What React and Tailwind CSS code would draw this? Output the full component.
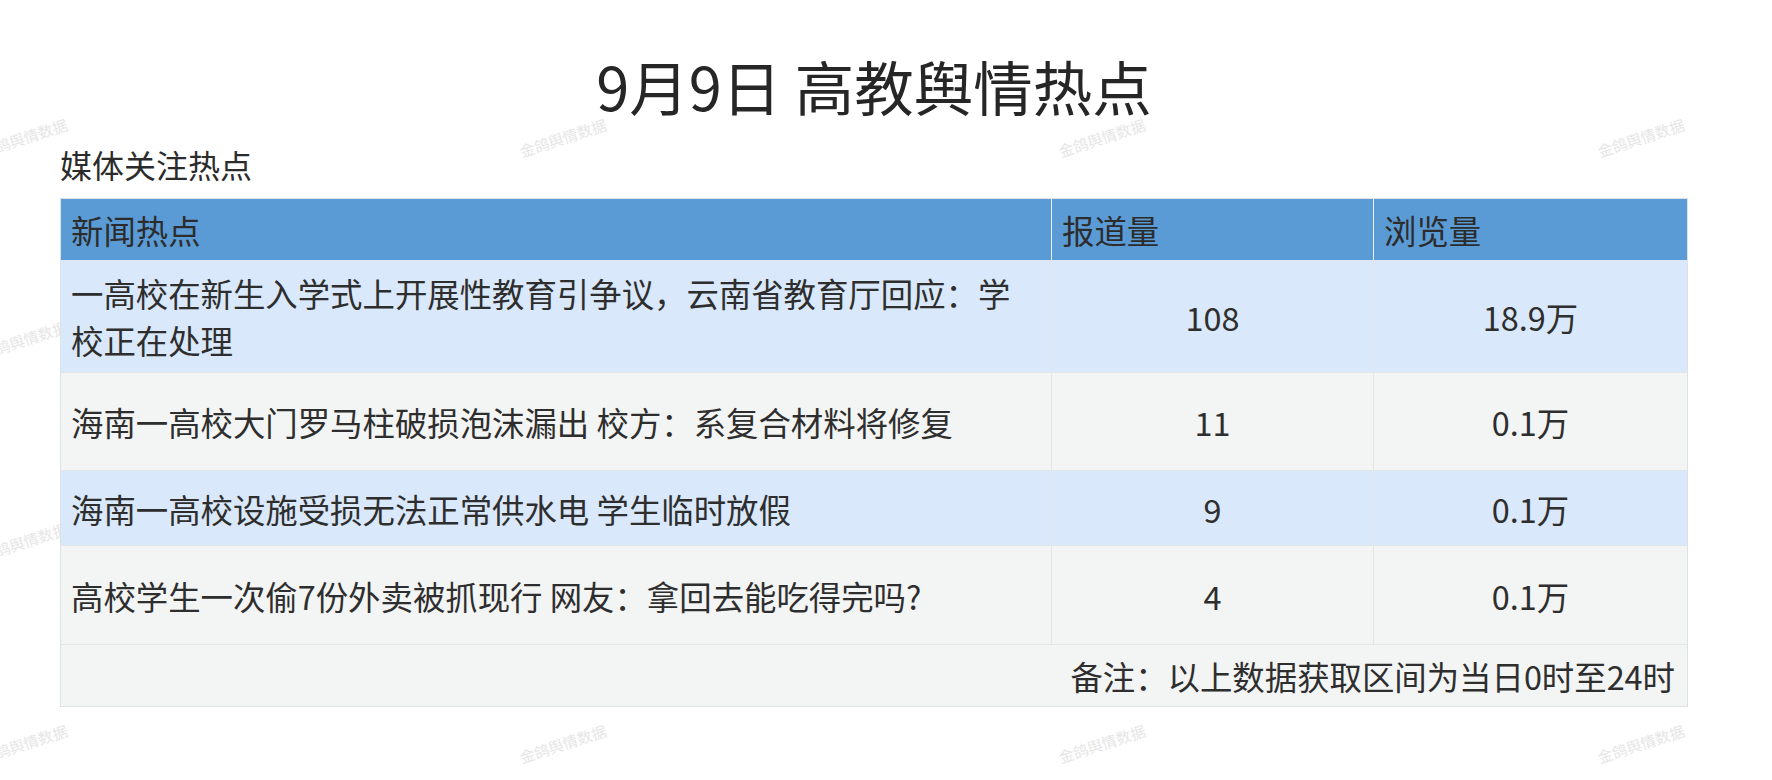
import React from "react";

const rows = [
  { t: "一高校在新生入学式上开展性教育引争议，云南省教育厅回应：学校正在处理", a: "108", b: "18.9万", bg: "bg-[#d9e8fa]", h: "h-[112px]" },
  { t: "海南一高校大门罗马柱破损泡沫漏出 校方：系复合材料将修复", a: "11", b: "0.1万", bg: "bg-[#f3f4f4]", h: "h-[98px] border-t border-[#e3e6e9]" },
  { t: "海南一高校设施受损无法正常供水电 学生临时放假", a: "9", b: "0.1万", bg: "bg-[#d9e8fa]", h: "h-[75px] border-t border-[#e3e6e9]" },
  { t: "高校学生一次偷7份外卖被抓现行 网友：拿回去能吃得完吗?", a: "4", b: "0.1万", bg: "bg-[#f3f4f4]", h: "h-[99px] border-t border-[#e3e6e9]" },
];

const marks = [
  [24, 138], [563, 138], [1102, 138], [1641, 138],
  [24, 340], [24, 542],
  [24, 744], [563, 744], [1102, 744], [1641, 744],
];

export default function App() {
  return (
    <div className="relative w-[1772px] h-[780px] overflow-hidden bg-white font-['Noto_Sans_CJK_SC','Noto_Sans',sans-serif] text-[#2e2e2e]">
      {marks.map(([x, y], i) => (
        <div
          key={i}
          className="absolute text-[15px] leading-[20px] text-[#e6e6e6] whitespace-nowrap -rotate-[18deg] -translate-x-1/2 -translate-y-1/2"
          style={{ left: x, top: y }}
        >
          金鸽舆情数据
        </div>
      ))}
      <div className="relative ml-[60px] w-[1628px]">
        <div className="pt-[44px] text-center text-[59.5px] leading-[82px] text-[#262626]">9月9日 高教舆情热点</div>
        <div className="mt-[16px] text-[32px] leading-[45px] text-[#2b2b2b]">媒体关注热点</div>
        <div className="mt-[11px] border border-[#dfe2e5] text-[32.4px] leading-[47px]">
          <div className="grid grid-cols-[990px_322px_314px] h-[61px] bg-[#5b9bd5] text-[#2c2c2c]">
            <div className="flex items-center pl-[10px]">新闻热点</div>
            <div className="flex items-center pl-[10px] border-l border-[#eaf1f8]">报道量</div>
            <div className="flex items-center pl-[10px] border-l border-[#eaf1f8]">浏览量</div>
          </div>
          {rows.map((r, i) => (
            <div key={i} className={`grid grid-cols-[990px_322px_314px] ${r.bg} ${r.h}`}>
              <div className="flex items-center pl-[10px] pr-[24px]">{r.t}</div>
              <div className="flex items-center justify-center border-l border-[#e3e6e9]">{r.a}</div>
              <div className="flex items-center justify-center border-l border-[#e3e6e9]">{r.b}</div>
            </div>
          ))}
          <div className="flex h-[62px] items-center justify-end border-t border-[#e3e6e9] bg-[#f3f4f4] pr-[12px]">
            备注：以上数据获取区间为当日0时至24时
          </div>
        </div>
      </div>
    </div>
  );
}
